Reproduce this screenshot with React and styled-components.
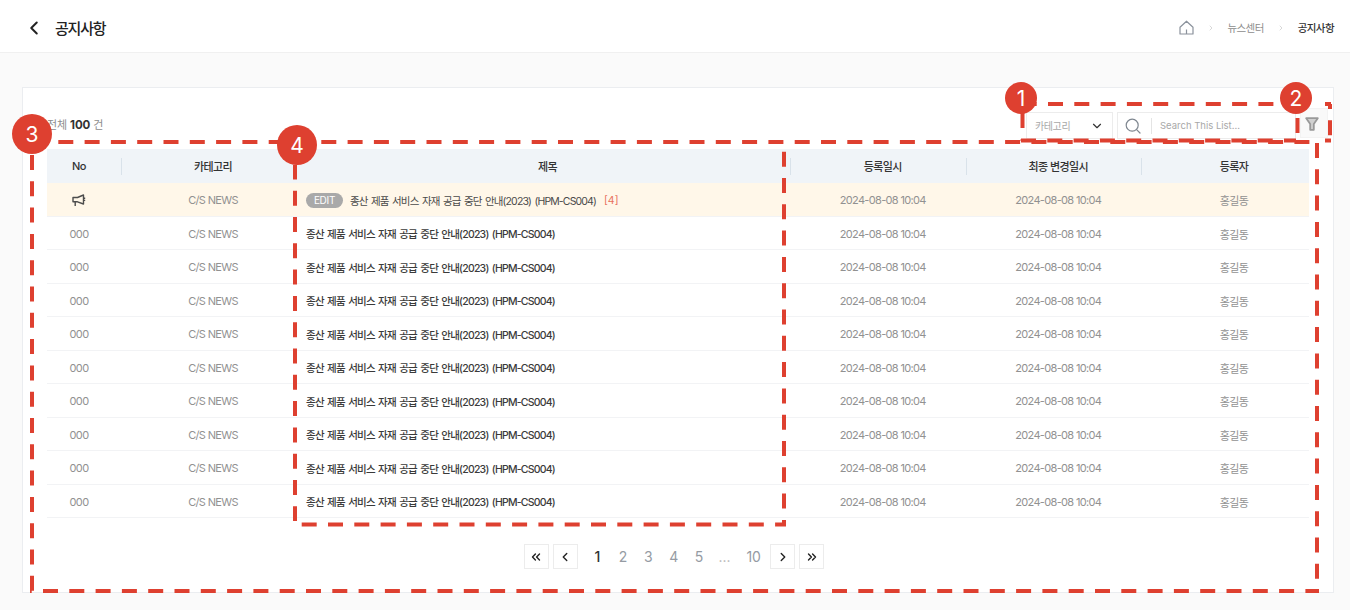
import React from "react";
import styled, { createGlobalStyle } from "styled-components";
import { ChevronLeft, ChevronRight, ChevronDown, ChevronsLeft, ChevronsRight } from "lucide-react";

const RED = "#de4030";
const ROWS = 9;

// dashed annotation lines, "start" is where one dash begins on the axis
const DASHES = [
  // box 3
  { x1: 32, y1: 142, x2: 1317, y2: 142, start: 32 },
  { x1: 32, y1: 142, x2: 32, y2: 591, start: 155 },
  { x1: 30, y1: 591, x2: 1319, y2: 591, start: 43 },
  { x1: 1317, y1: 142, x2: 1317, y2: 591, start: 143 },
  // box 4
  { x1: 295, y1: 165, x2: 295, y2: 521, start: 164.4 },
  { x1: 295, y1: 524.5, x2: 786, y2: 524.5, start: 301.7 },
  { x1: 784, y1: 142, x2: 784, y2: 526, start: 151.7 },
  // box 1
  { x1: 1022, y1: 104, x2: 1298, y2: 104, start: 1021.7 },
  { x1: 1022.5, y1: 104, x2: 1022.5, y2: 141, start: 113 },
  { x1: 1021, y1: 140.5, x2: 1296, y2: 140.5, start: 1021 },
  // box 2
  { x1: 1297.5, y1: 104, x2: 1297.5, y2: 141, start: 118 },
  { x1: 1325, y1: 104, x2: 1331, y2: 104, start: 1325 },
  { x1: 1330, y1: 104, x2: 1330, y2: 141, start: 94 },
  { x1: 1325, y1: 140.5, x2: 1331, y2: 140.5, start: 1325 },
];

const MARKS = [
  { n: 1, x: 1021, y: 98, size: 32 },
  { n: 2, x: 1296, y: 98, size: 32 },
  { n: 3, x: 32, y: 134, size: 40 },
  { n: 4, x: 297, y: 145, size: 40 },
];

const PERIOD = 26.3;

function dashOffset(d) {
  const from = d.y1 === d.y2 ? d.x1 : d.y1;
  const gap = ((d.start - from) % PERIOD + PERIOD) % PERIOD;
  return PERIOD - gap;
}

function HomeIcon() {
  return (
    <svg width="15" height="15" viewBox="0 0 15 15" fill="none" stroke="#8b929c" strokeWidth="1.2">
      <path d="M1 7.2 7.5 1.2 14 7.2V14H1Z" strokeLinejoin="round" />
      <path d="M7.5 9.5V14" />
    </svg>
  );
}

function SearchIcon() {
  return (
    <svg width="16" height="16" viewBox="0 0 16 16" fill="none" stroke="#7f8790" strokeWidth="1.2">
      <circle cx="7.2" cy="7.2" r="6" />
      <path d="M11.6 11.6 15 15" strokeLinecap="round" />
    </svg>
  );
}

function FilterIcon() {
  return (
    <svg width="14" height="14" viewBox="0 0 14 14" fill="#d0d0d0" stroke="#999" strokeWidth="1.8">
      <path d="M1.2 1.2H12.8L8.8 7V12.8H5.2V7Z" strokeLinejoin="round" />
    </svg>
  );
}

function MegaphoneIcon() {
  return (
    <svg width="14" height="13" viewBox="0 0 14 13" fill="none" stroke="#4d4d4d" strokeWidth="1.4">
      <path d="M1 3.5H5.5L11.5 1V10L5.5 7.8H1Z" strokeLinejoin="round" />
      <path d="M11.5 4.2H13.2M11.5 6.4H13.2M3.2 7.8V12" />
    </svg>
  );
}

function TitleText() {
  return <>종산 제품 서비스 자재 공급 중단 안내(2023) (HPM-CS004)</>;
}

export default function App() {
  return (
    <Page>
      <GlobalStyle />
      <Header>
        <PageTitle>
          <ChevronLeft size={22} color="#222" strokeWidth={2.2} />
          <h1>공지사항</h1>
        </PageTitle>
        <Crumbs>
          <HomeIcon />
          <ChevronRight size={8} color="#c4c4c4" strokeWidth={2} />
          <Crumb>뉴스센터</Crumb>
          <ChevronRight size={8} color="#c4c4c4" strokeWidth={2} />
          <Crumb $current>공지사항</Crumb>
        </Crumbs>
      </Header>

      <Main>
        <Card>
          <Toolbar>
            <Total>
              전체 <b>100</b> 건
            </Total>
            <Tools>
              <Select>
                카테고리
                <ChevronDown size={14} color="#333" strokeWidth={2} />
              </Select>
              <Search>
                <SearchIcon />
                <SearchInput>Search This List...</SearchInput>
              </Search>
              <FilterButton>
                <FilterIcon />
              </FilterButton>
            </Tools>
          </Toolbar>

          <TableHead>
            <HeadCell>No</HeadCell>
            <HeadCell>카테고리</HeadCell>
            <HeadCell>제목</HeadCell>
            <HeadCell>등록일시</HeadCell>
            <HeadCell>최종 변경일시</HeadCell>
            <HeadCell>등록자</HeadCell>
          </TableHead>

          <Row $notice>
            <Cell>
              <MegaphoneIcon />
            </Cell>
            <Cell>C/S NEWS</Cell>
            <TitleCell $notice>
              <Badge>EDIT</Badge>
              <TitleText />
              <Count>[4]</Count>
            </TitleCell>
            <Cell>2024-08-08 10:04</Cell>
            <Cell>2024-08-08 10:04</Cell>
            <Cell>홍길동</Cell>
          </Row>

          {Array.from({ length: ROWS }).map((_, i) => (
            <Row key={i}>
              <Cell>000</Cell>
              <Cell>C/S NEWS</Cell>
              <TitleCell>
                <TitleText />
              </TitleCell>
              <Cell>2024-08-08 10:04</Cell>
              <Cell>2024-08-08 10:04</Cell>
              <Cell>홍길동</Cell>
            </Row>
          ))}

          <Pagination>
            <PageButton>
              <ChevronsLeft size={14} color="#222" strokeWidth={2.4} />
            </PageButton>
            <PageButton>
              <ChevronLeft size={14} color="#222" strokeWidth={2.4} />
            </PageButton>
            <PageNumbers>
              <PageNumber $active>1</PageNumber>
              <PageNumber>2</PageNumber>
              <PageNumber>3</PageNumber>
              <PageNumber>4</PageNumber>
              <PageNumber>5</PageNumber>
              <PageNumber $dots>...</PageNumber>
              <PageNumber $wide>10</PageNumber>
            </PageNumbers>
            <PageButton>
              <ChevronRight size={14} color="#222" strokeWidth={2.4} />
            </PageButton>
            <PageButton>
              <ChevronsRight size={14} color="#222" strokeWidth={2.4} />
            </PageButton>
          </Pagination>
        </Card>
      </Main>

      <Overlay width="1350" height="610" viewBox="0 0 1350 610">
        {DASHES.map((d, i) => (
          <line
            key={i}
            x1={d.x1}
            y1={d.y1}
            x2={d.x2}
            y2={d.y2}
            stroke={RED}
            strokeWidth="4"
            strokeDasharray="15 11.3"
            strokeDashoffset={dashOffset(d)}
          />
        ))}
      </Overlay>
      {MARKS.map((m) => (
        <Mark key={m.n} $x={m.x} $y={m.y} $size={m.size}>
          {m.n}
        </Mark>
      ))}
    </Page>
  );
}

const GlobalStyle = createGlobalStyle`
  html, body {
    margin: 0;
    padding: 0;
    background: #fafafa;
    overflow: hidden;
  }
  * {
    box-sizing: border-box;
  }
  body {
    font-family: Inter, "Noto Sans CJK KR", sans-serif;
  }
`;

const Page = styled.div`
  position: relative;
  width: 1350px;
  height: 610px;
  overflow: hidden;
  background: #fafafa;
`;

const Header = styled.header`
  display: flex;
  align-items: center;
  justify-content: space-between;
  height: 53px;
  padding: 3px 16px 0 23px;
  background: #fff;
  border-bottom: 1px solid #f0f0f0;
`;

const PageTitle = styled.div`
  display: flex;
  align-items: center;
  gap: 10px;

  h1 {
    margin: 0;
    font-size: 15px;
    font-weight: 500;
    letter-spacing: -1.2px;
    color: #222;
  }
`;

const Crumbs = styled.nav`
  display: flex;
  align-items: center;
  gap: 13px;
`;

const Crumb = styled.span`
  font-size: 10.5px;
  letter-spacing: -0.6px;
  font-weight: ${(p) => (p.$current ? 500 : 400)};
  color: ${(p) => (p.$current ? "#333" : "#8d8d8d")};
`;

const Main = styled.main`
  padding: 34px 16px 0 22px;
`;

const Card = styled.section`
  height: 506px;
  padding: 24px 24px 0;
  background: #fff;
  border: 1px solid #ebedf0;
`;

const Toolbar = styled.div`
  display: flex;
  align-items: center;
  justify-content: space-between;
  height: 27px;
  margin-right: -19px;
  margin-bottom: 10px;
`;

const Total = styled.div`
  padding-bottom: 3px;
  font-size: 11px;
  letter-spacing: -0.1px;
  color: #8d8d8d;

  b {
    font-size: 11.5px;
    font-weight: 700;
    color: #333;
  }
`;

const Tools = styled.div`
  display: flex;
  gap: 4px;
`;

const Select = styled.div`
  display: flex;
  align-items: center;
  justify-content: space-between;
  width: 87px;
  height: 27px;
  padding: 0 8px;
  font-size: 10px;
  letter-spacing: -0.4px;
  color: #a8a8a8;
  background: #fff;
  border: 1px solid #ececec;
`;

const Search = styled.div`
  display: flex;
  align-items: center;
  width: 179px;
  height: 27px;
  padding-left: 7px;
  background: #fff;
  border: 1px solid #ececec;
`;

const SearchInput = styled.span`
  display: flex;
  align-items: center;
  height: 16px;
  margin-left: 10px;
  padding-left: 8px;
  font-size: 9.5px;
  color: #a8a8a8;
  border-left: 1px solid #e4e4e4;
`;

const FilterButton = styled.div`
  display: flex;
  align-items: center;
  justify-content: center;
  width: 28px;
  height: 30px;
  margin-top: -4px;
  padding: 2px 4px 0 0;
  background: #f9f9f9;
  border: 1px solid #f3f3f3;
`;

const columns = `
  display: grid;
  grid-template-columns: 79px 174px 495px 175.5px 175.5px 1fr;
`;

const TableHead = styled.div`
  ${columns}
  height: 34px;
  background: #f0f4f8;
`;

const HeadCell = styled.div`
  position: relative;
  display: flex;
  align-items: center;
  justify-content: center;
  font-size: 11px;
  font-weight: 500;
  letter-spacing: -0.6px;
  color: #333;

  &:first-child {
    padding-right: 15px;
  }
  &:last-child {
    padding-left: 13px;
  }
  &:not(:last-child)::after {
    content: "";
    position: absolute;
    top: 9px;
    right: 4px;
    width: 1px;
    height: 17px;
    background: #d9e2ea;
  }
`;

const Row = styled.div`
  ${columns}
  height: 33.5px;
  padding-top: 2px;
  background: ${(p) => (p.$notice ? "#fff7e9" : "#fff")};
  border-bottom: 1px solid #f2f3f5;
`;

const Cell = styled.div`
  display: flex;
  align-items: center;
  justify-content: center;
  font-size: 11px;
  letter-spacing: -0.66px;
  color: #919191;

  &:first-child {
    padding-right: 15px;
  }
  &:last-child {
    padding-left: 13px;
  }
`;

const TitleCell = styled.div`
  display: flex;
  align-items: center;
  padding-left: 6px;
  font-size: 10.5px;
  word-spacing: 1.3px;
  letter-spacing: ${(p) => (p.$notice ? "-0.85px" : "-0.78px")};
  font-weight: ${(p) => (p.$notice ? 400 : 500)};
  color: ${(p) => (p.$notice ? "#4a4a4a" : "#3a3a3a")};
`;

const Badge = styled.span`
  display: inline-flex;
  align-items: center;
  justify-content: center;
  width: 37px;
  height: 15px;
  margin-right: 7px;
  font-size: 10px;
  letter-spacing: -0.3px;
  color: #fff;
  background: #a9a9a9;
  border-radius: 8px;
`;

const Count = styled.span`
  margin-left: 8px;
  letter-spacing: 0;
  color: #e8705c;
`;

const Pagination = styled.div`
  display: flex;
  justify-content: center;
  align-items: center;
  gap: 4px;
  margin-top: 26px;
  padding-right: 8px;
`;

const PageButton = styled.div`
  display: flex;
  align-items: center;
  justify-content: center;
  width: 25px;
  height: 25px;
  background: #fff;
  border: 1px solid #ececec;
`;

const PageNumbers = styled.div`
  display: flex;
  margin: 0 -4px 0 3px;
`;

const PageNumber = styled.span`
  display: flex;
  align-items: center;
  justify-content: center;
  width: ${(p) => (p.$wide ? "33px" : "25.4px")};
  height: 25px;
  font-size: 14px;
  font-weight: ${(p) => (p.$active ? 500 : 400)};
  color: ${(p) => (p.$active ? "#333" : p.$dots ? "#b5b5b5" : "#959ba3")};
`;

const Overlay = styled.svg`
  position: absolute;
  top: 0;
  left: 0;
  pointer-events: none;
`;

const Mark = styled.div`
  position: absolute;
  left: ${(p) => p.$x - p.$size / 2}px;
  top: ${(p) => p.$y - p.$size / 2}px;
  width: ${(p) => p.$size}px;
  height: ${(p) => p.$size}px;
  display: flex;
  align-items: center;
  justify-content: center;
  font-size: 21px;
  font-weight: 400;
  color: #fff;
  background: ${RED};
  border-radius: 50%;
`;
